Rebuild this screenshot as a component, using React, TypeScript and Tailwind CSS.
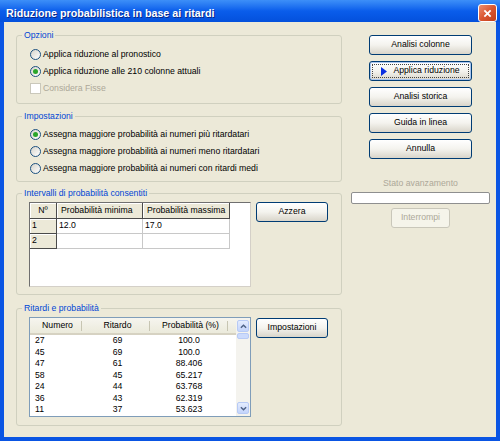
import type { ReactNode } from "react";

const rows = [
  ["27", "69", "100.0"],
  ["45", "69", "100.0"],
  ["47", "61", "88.406"],
  ["58", "45", "65.217"],
  ["24", "44", "63.768"],
  ["36", "43", "62.319"],
  ["11", "37", "53.623"],
];

function XpButton({
  children,
  className = "",
  disabled = false,
  isDefault = false,
}: {
  children: ReactNode;
  className?: string;
  disabled?: boolean;
  isDefault?: boolean;
}) {
  const look = disabled
    ? "border-[#C9C7BA] bg-[#F5F4EA] text-[#ACA899]"
    : "border-[#003C74] bg-linear-to-b from-white via-[#F4F3EE] to-[#D9D5CA] text-black";
  const focus = isDefault
    ? "shadow-[inset_0_0_0_1px_#A9C5EF] outline-1 outline-dotted outline-[#444] outline-offset-[-4px]"
    : "";
  return (
    <div
      className={`h-[20px] rounded-[3px] border flex items-center justify-center gap-[6px] ${look} ${focus} ${className}`}
    >
      {children}
    </div>
  );
}

function Radio({ checked = false, label }: { checked?: boolean; label: string }) {
  return (
    <div className="h-[17px] flex items-center pl-[13px] gap-[2px]">
      <span className="w-[11px] h-[11px] rounded-full border border-[#1C5180] bg-linear-to-br from-[#D6D4CC] to-white flex items-center justify-center">
        {checked && <span className="w-[5px] h-[5px] rounded-full bg-[#2AA52A]" />}
      </span>
      <span>{label}</span>
    </div>
  );
}

function Group({
  title,
  className,
  children,
}: {
  title: string;
  className: string;
  children: ReactNode;
}) {
  return (
    <fieldset className={`border border-[#D0D0BF] rounded-[3px] ${className}`}>
      <legend className="ml-[5px] px-[2px] leading-[11px] text-[#0046D5]">{title}</legend>
      {children}
    </fieldset>
  );
}

function ScrollArrow({ up }: { up: boolean }) {
  return (
    <div className="h-[12px] rounded-[2px] border border-[#B7CAF5] bg-linear-to-b from-[#E4ECFE] to-[#C3D4FB] flex items-center justify-center">
      <svg viewBox="0 0 8 5" className="w-[7px] h-[5px]">
        <path
          d={up ? "M1 4 L4 1 L7 4" : "M1 1 L4 4 L7 1"}
          fill="none"
          stroke="#4D6185"
          strokeWidth="1.6"
        />
      </svg>
    </div>
  );
}

export default function App() {
  const hdr =
    "bg-[#ECE9D8] border-r border-b border-[#4A4A4A] shadow-[inset_1px_1px_0_#fff]";
  const cell = "border-r border-b border-[#C8C8C8]";
  return (
    <div className="w-[500px] h-[441px] bg-[#0A55E3] flex flex-col font-['Liberation_Sans',Arial,sans-serif] text-[8.7px] text-black">
      {/* title bar */}
      <div className="h-[22px] flex items-start justify-between pl-[6px] pr-[3px] bg-linear-to-b from-[#3D8FF8] via-[#0A5DEB] to-[#0450DC]">
        <span className="mt-[7px] leading-[13px] text-[10.7px] font-bold text-white [text-shadow:1px_1px_0_#0A2A8A]">
          Riduzione probabilistica in base ai ritardi
        </span>
        <div className="mt-[4px] w-[19px] h-[18px] rounded-[3px] border border-white bg-linear-to-br from-[#EC8E6E] via-[#DA5630] to-[#C23E19] flex items-center justify-center">
          <svg viewBox="0 0 10 10" className="w-[9px] h-[9px]">
            <path d="M1.5 1.5 L8.5 8.5 M8.5 1.5 L1.5 8.5" stroke="white" strokeWidth="2" />
          </svg>
        </div>
      </div>

      <div className="flex-1 mx-[4px] mb-[4px] bg-[#ECE9D8] flex">
        {/* left column */}
        <div className="ml-[12px] w-[326px] pt-[8px] flex flex-col">
          <Group title="Opzioni" className="h-[74px] pt-[5px]">
            <Radio label="Applica riduzione al pronostico" />
            <Radio checked label="Applica riduzione alle 210 colonne attuali" />
            <div className="h-[17px] flex items-center pl-[13px] gap-[2px] text-[#ACA899]">
              <span className="w-[11px] h-[11px] border border-[#CAC8BB] bg-white" />
              <span>Considera Fisse</span>
            </div>
          </Group>

          <Group title="Impostazioni" className="mt-[7px] h-[71px] pt-[4px]">
            <Radio checked label="Assegna maggiore probabilità ai numeri più ritardatari" />
            <Radio label="Assegna maggiore probabilità ai numeri meno ritardatari" />
            <Radio label="Assegna maggiore probabilità ai numeri con ritardi medi" />
          </Group>

          <Group title="Intervalli di probabilità consentiti" className="mt-[6px] h-[107px] pt-[3px]">
            <div className="flex gap-[5px] ml-[12px]">
              <div className="w-[222px] h-[85px] bg-white border border-[#6F6F6F] border-r-[#D4D0C8] border-b-[#D4D0C8]">
                <div className="flex h-[16px]">
                  <div className={`w-[27px] ${hdr} flex items-center justify-center`}>Nº</div>
                  <div className={`w-[86px] ${hdr} flex items-center pl-[4px]`}>Probabilità minima</div>
                  <div className={`w-[87px] ${hdr} flex items-center pl-[4px]`}>Probabilità massima</div>
                </div>
                {[
                  ["1", "12.0", "17.0"],
                  ["2", "", ""],
                ].map((r) => (
                  <div key={r[0]} className="flex h-[15px]">
                    <div className={`w-[27px] ${hdr} flex items-center pl-[2px]`}>{r[0]}</div>
                    <div className={`w-[86px] ${cell} flex items-center pl-[2px]`}>{r[1]}</div>
                    <div className={`w-[87px] ${cell} flex items-center pl-[2px]`}>{r[2]}</div>
                  </div>
                ))}
              </div>
              <XpButton className="w-[72px]">Azzera</XpButton>
            </div>
          </Group>

          <Group title="Ritardi e probabilità" className="mt-[8px] h-[123px] pt-[3px]">
            <div className="flex gap-[5px] ml-[12px]">
              <div className="w-[222px] h-[100px] border border-[#7F9DB9] bg-white flex">
                <div className="flex-1 flex flex-col">
                  <div className="h-[17px] flex bg-linear-to-b from-[#F6F5EF] to-[#EBEADB] border-b-2 border-[#D6D2C2]">
                    {[
                      ["Numero", "w-[52px]"],
                      ["Ritardo", "w-[68px]"],
                      ["Probabilità (%)", "w-[78px]"],
                    ].map(([t, w]) => (
                      <div key={t} className={`${w} flex items-center`}>
                        <span className="flex-1 text-center pl-[4px]">{t}</span>
                        <span className="w-px h-[10px] bg-[#C7C5B2]" />
                      </div>
                    ))}
                  </div>
                  {rows.map((r) => (
                    <div key={r[0]} className="flex h-[11.5px] leading-[11.5px]">
                      <div className="w-[52px] pl-[5px]">{r[0]}</div>
                      <div className="w-[68px] text-center pl-[3px]">{r[1]}</div>
                      <div className="w-[78px] text-center">{r[2]}</div>
                    </div>
                  ))}
                </div>
                <div className="w-[14px] bg-[#F4F3EE] flex flex-col px-px pt-[2px] pb-[2px]">
                  <ScrollArrow up />
                  <div className="mt-px h-[6px] rounded-[2px] border border-[#B7CAF5] bg-[#CBDAFC]" />
                  <div className="flex-1" />
                  <ScrollArrow up={false} />
                </div>
              </div>
              <XpButton className="w-[72px] mt-px">Impostazioni</XpButton>
            </div>
          </Group>
        </div>

        {/* right column */}
        <div className="ml-[9px] w-[139px] pt-[13px] flex flex-col items-center">
          <XpButton className="w-[103px]">Analisi colonne</XpButton>
          <XpButton className="w-[103px] mt-[6px]" isDefault>
            <svg viewBox="0 0 6 9" className="w-[6px] h-[9px]">
              <polygon points="0,0 6,4.5 0,9" fill="#0A2EE0" />
            </svg>
            <span>Applica riduzione</span>
          </XpButton>
          <XpButton className="w-[103px] mt-[6px]">Analisi storica</XpButton>
          <XpButton className="w-[103px] mt-[6px]">Guida in linea</XpButton>
          <XpButton className="w-[103px] mt-[6px]">Annulla</XpButton>
          <div className="mt-[19px] leading-[11px] text-[#ACA899]">Stato avanzamento</div>
          <div className="mt-[3px] w-full h-[12px] rounded-[2px] border border-[#8E8F8F] bg-white" />
          <XpButton className="w-[59px] h-[19px] mt-[4px]" disabled>
            Interrompi
          </XpButton>
        </div>
      </div>
    </div>
  );
}
